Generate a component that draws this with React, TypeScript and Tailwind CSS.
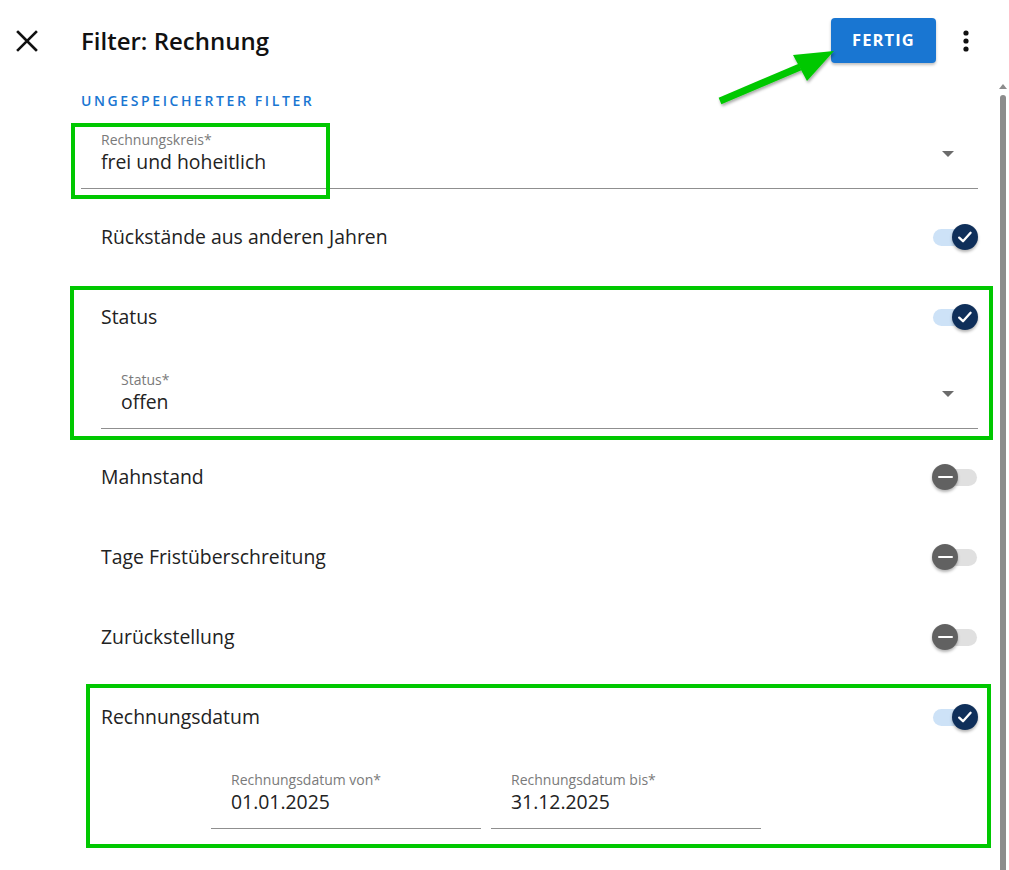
import React from "react";

const font = { fontFamily: '"Open Sans", "Noto Sans", sans-serif' };

function Toggle({ on }: { on: boolean }) {
  return (
    <div className="relative w-[46px] h-[28px] flex items-center">
      <div className={`w-[44px] h-[17px] ml-[1px] rounded-full ${on ? "bg-[#cde2f7]" : "bg-[#e0e0e0]"}`} />
      <div
        className={`absolute top-[1px] ${on ? "right-0 bg-[#0f2f5a]" : "left-0 bg-[#616161]"} w-[26px] h-[26px] rounded-full flex items-center justify-center shadow-[0_2px_3px_rgba(0,0,0,0.3)]`}
      >
        {on ? (
          <svg width="18" height="18" viewBox="0 0 18 18">
            <path d="M3.2 9.6 L7 13.2 L14.6 4.8" fill="none" stroke="white" strokeWidth="2.3" strokeLinecap="round" strokeLinejoin="round" />
          </svg>
        ) : (
          <div className="w-[15px] h-[2.5px] bg-white rounded" />
        )}
      </div>
    </div>
  );
}

function Row({ label, on }: { label: string; on: boolean }) {
  return (
    <div className="h-[80px] flex items-center justify-between pl-[20px]">
      <span className="text-[19.4px] text-[#222]">{label}</span>
      <Toggle on={on} />
    </div>
  );
}

function Field({ label, value, arrow, className }: { label: string; value: string; arrow?: boolean; className?: string }) {
  return (
    <div className={`relative h-[80px] ${className ?? ""}`}>
      <div className="h-[72px] border-b border-[#8f8f8f] pl-[20px] pt-[14px] relative">
        <div className="text-[14px] leading-[18px] text-[#7a7a7a]">{label}</div>
        <div className="text-[19.4px] leading-[28px] text-[#222] -mt-[1px]">{value}</div>
        {arrow && (
          <svg className="absolute right-[24px] top-[34px]" width="12" height="7" viewBox="0 0 12 7">
            <path d="M0 0 L12 0 L6 6 Z" fill="#6b6b6b" />
          </svg>
        )}
      </div>
    </div>
  );
}

export default function App() {
  return (
    <div className="relative w-[1009px] h-[870px] bg-white overflow-hidden" style={font}>
      {/* Header */}
      <div className="h-[83px] flex items-center">
        <div className="w-[81px] h-[83px] flex items-center pl-[16px] pb-[2px]">
          <svg width="22" height="22" viewBox="0 0 22 22">
            <path d="M2 2 L20 20 M20 2 L2 20" stroke="#111" strokeWidth="2.6" strokeLinecap="square" />
          </svg>
        </div>
        <h1 className="text-[24px] font-semibold text-[#111] flex-1 pb-[2px]">Filter: Rechnung</h1>
        <button className="w-[105px] h-[45px] mb-[2px] rounded-[4px] bg-[#1976d2] text-white text-[16.5px] font-bold tracking-[1.1px] shadow-[0_2px_3px_rgba(0,0,0,0.25)]">
          FERTIG
        </button>
        <div className="w-[73px] flex justify-start pl-[27px] pb-[2px]">
          <svg width="6" height="22" viewBox="0 0 6 22">
            <circle cx="3" cy="3" r="2.6" fill="#111" />
            <circle cx="3" cy="11" r="2.6" fill="#111" />
            <circle cx="3" cy="19" r="2.6" fill="#111" />
          </svg>
        </div>
      </div>

      {/* Body */}
      <div className="flex h-[787px]">
        <div className="pl-[81px] w-[978px] shrink-0">
          <div className="h-[34px] flex items-center text-[14px] font-semibold tracking-[2.6px] text-[#1976d2]">
            UNGESPEICHERTER FILTER
          </div>
          <Field label="Rechnungskreis*" value="frei und hoheitlich" arrow />
          <Row label="Rückstände aus anderen Jahren" on />
          <Row label="Status" on />
          <Field label="Status*" value="offen" arrow className="ml-[20px]" />
          <Row label="Mahnstand" on={false} />
          <Row label="Tage Fristüberschreitung" on={false} />
          <Row label="Zurückstellung" on={false} />
          <Row label="Rechnungsdatum" on />
          <div className="flex gap-[10px] pl-[130px]">
            <Field label="Rechnungsdatum von*" value="01.01.2025" className="w-[270px]" />
            <Field label="Rechnungsdatum bis*" value="31.12.2025" className="w-[270px]" />
          </div>
        </div>
        <div className="flex-1" />
        <div className="w-[8px] mr-[2px] flex flex-col items-center">
          <svg width="8" height="6" viewBox="0 0 8 6">
            <path d="M0 6 L4 1 L8 6 Z" fill="#8c8c8c" />
          </svg>
          <div className="mt-[6px] w-[6px] flex-1 bg-[#8c8c8c] rounded-t-[3px]" />
        </div>
      </div>

      {/* Annotations */}
      <div className="absolute left-[71px] top-[123px] w-[259px] h-[76px] border-[4px] border-[#00c800] pointer-events-none" />
      <div className="absolute left-[70px] top-[286px] w-[923px] h-[154px] border-[4px] border-[#00c800] pointer-events-none" />
      <div className="absolute left-[86px] top-[684px] w-[905px] h-[164px] border-[4px] border-[#00c800] pointer-events-none" />
      <svg className="absolute left-0 top-0 pointer-events-none" width="1009" height="870" viewBox="0 0 1009 870">
        <defs>
          <filter id="sh" x="-20%" y="-20%" width="140%" height="140%">
            <feDropShadow dx="1" dy="2" stdDeviation="1.5" floodColor="#000" floodOpacity="0.35" />
          </filter>
        </defs>
        <g filter="url(#sh)">
          <path d="M720 101 L800 67" stroke="#00c800" strokeWidth="7" strokeLinecap="butt" />
          <path d="M793 55 L834 51 L807 81 Z" fill="#00c800" />
        </g>
      </svg>
    </div>
  );
}
